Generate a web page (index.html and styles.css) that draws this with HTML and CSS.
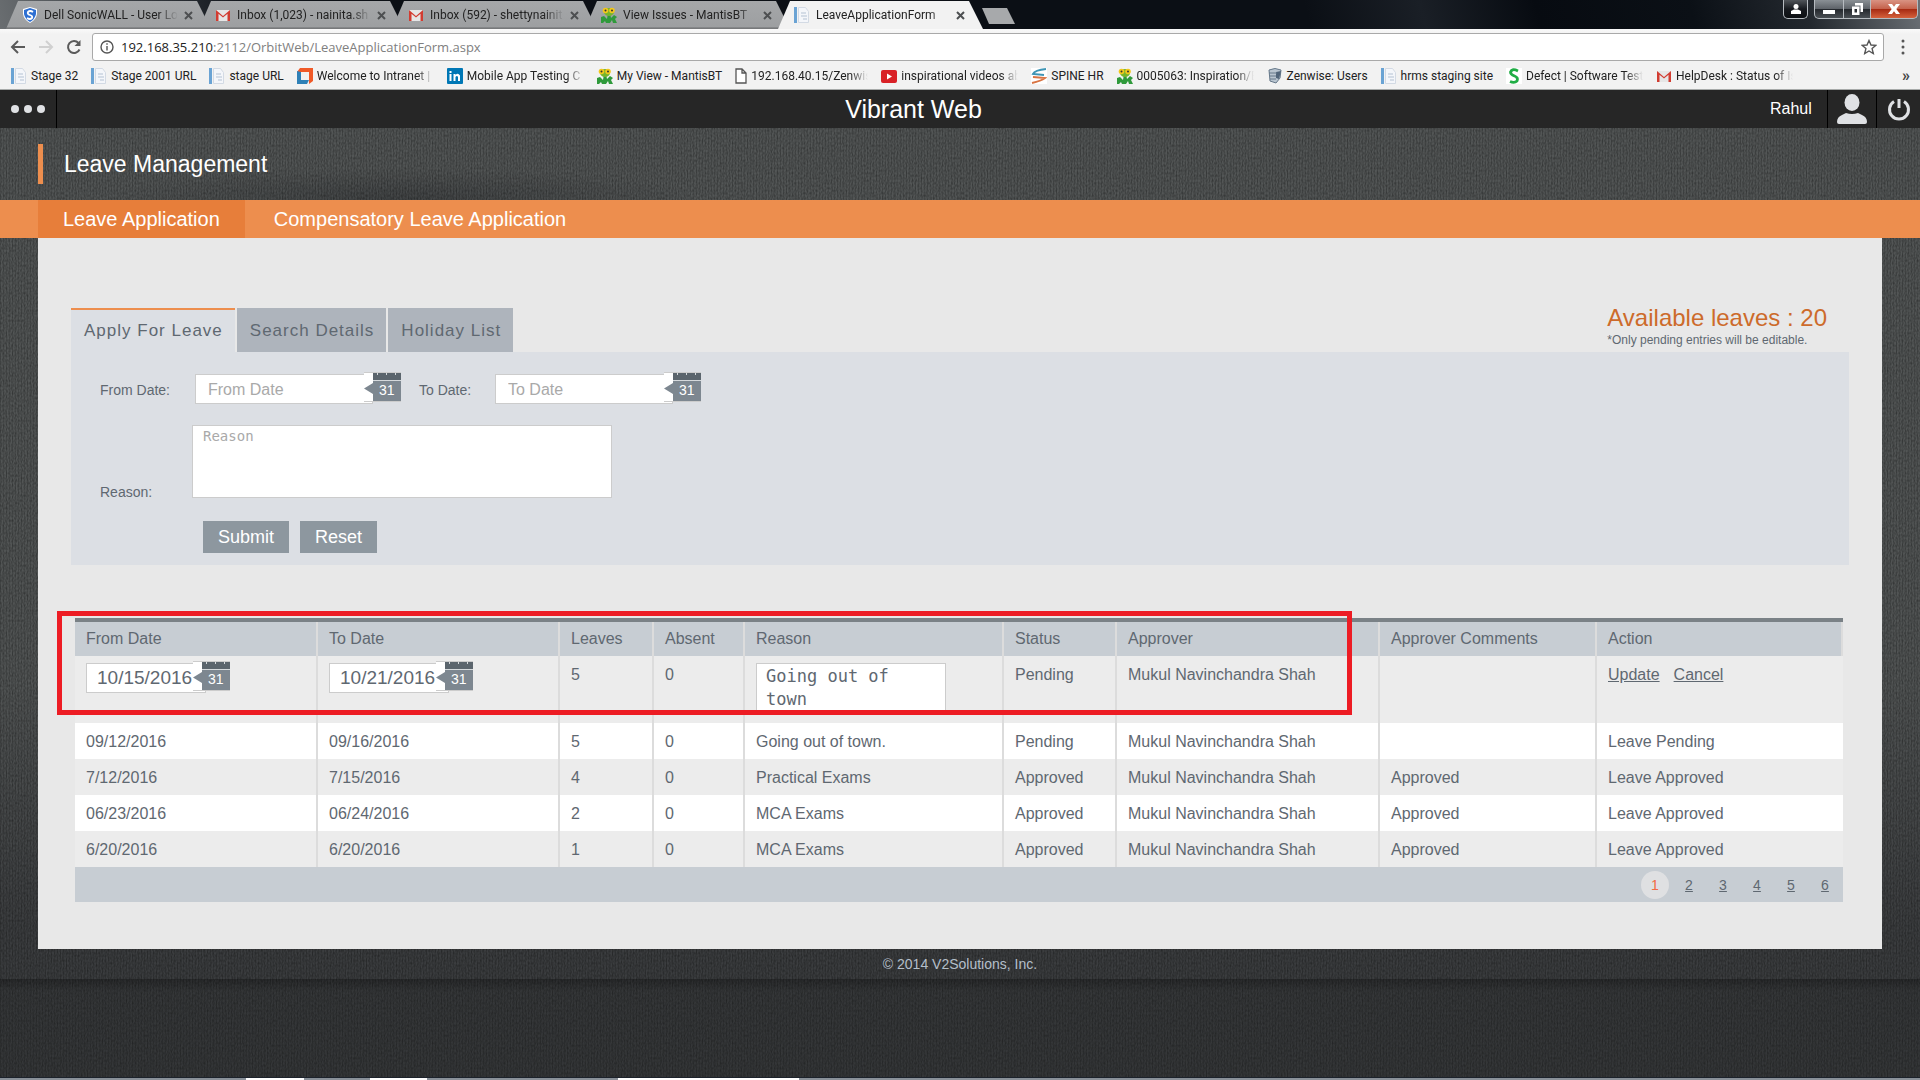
FILE: index.html
```html
<!DOCTYPE html>
<html lang="en">
<head>
<meta charset="utf-8">
<title>LeaveApplicationForm</title>
<link rel="stylesheet" href="styles.css">
</head>
<body>
<svg class="defs" aria-hidden="true">
  <symbol id="gmail" viewBox="0 0 16 16"><path fill="#e6e6e6" d="M1 3h14v11H1z"/><path fill="#d23c31" d="M1 3l7 6 7-6v11h-2.500V6.800L8 10.600 3.500 6.800V14H1z"/></symbol>
  <symbol id="doc" viewBox="0 0 16 16"><path fill="#6aa3d4" d="M0 0h3v16H0z"/><path fill="#f4f6fa" stroke="#d3dae4" d="M4.500.5h7l3 4v11h-10z"/><path stroke="#b4c2d3" d="M7 6h5M7 9h6M9 12h4"/></symbol>
  <symbol id="mantis" viewBox="0 0 16 16"><path fill="#2f9a3b" d="M0 10l3-1 3 3 1-6h2l1 5 3-3 3 2-2 2 2 4h-4l-1-3-2 3H5l-1-2-2 2H0z"/><ellipse cx="8" cy="5" rx="5" ry="4" fill="#77b52c"/><circle cx="4.500" cy="3.500" r="2.800" fill="#f3c81c"/><circle cx="11" cy="3.500" r="2.800" fill="#f3c81c"/><circle cx="4.500" cy="3.500" r="1" fill="#333"/><circle cx="11" cy="3.500" r="1" fill="#333"/></symbol>
  <symbol id="cal" viewBox="0 0 37 30"><path fill="#fff" d="M0 1h9v28H0z"/><path fill="#ccc" d="M0 0h37v1H0zM0 29h37v1H0z"/><path fill="#5b656d" d="M9 1h28v7H9z"/><path fill="#d5d9dc" d="M13 1h1v2h-1zM22 1h1v2h-1zM31 1h1v2h-1zM9 8h28v1H9z"/><path fill="#7d8790" d="M9 9h28v20H9V22L0 16.500 9 11z"/><text x="15" y="23" class="cal-num">31</text></symbol>
</svg>

<header class="browser">
  <div class="tabstrip">
    <div class="tab"><svg class="ico" viewBox="0 0 16 16"><path fill="#fff" d="M8 0l7 2v5q-1 6-7 9-6-3-7-9V2z"/><path fill="#2d6fd2" d="M8 1l6 2v4q-1 5-6 8-5-3-6-8V3z"/><path d="M11 5Q8 3 6 5q-1 2 2 3t2 3q-2 2-5 0" fill="none" stroke="#fff" stroke-width="1.800"/></svg><span class="tab-title">Dell SonicWALL - User Lo</span><button class="close" aria-label="Close tab"><svg viewBox="0 0 9 9"><path d="M1 1l7 7M8 1L1 8"/></svg></button></div>
    <div class="tab"><svg class="ico"><use href="#gmail"/></svg><span class="tab-title">Inbox (1,023) - nainita.sh</span><button class="close" aria-label="Close tab"><svg viewBox="0 0 9 9"><path d="M1 1l7 7M8 1L1 8"/></svg></button></div>
    <div class="tab"><svg class="ico"><use href="#gmail"/></svg><span class="tab-title">Inbox (592) - shettynainit</span><button class="close" aria-label="Close tab"><svg viewBox="0 0 9 9"><path d="M1 1l7 7M8 1L1 8"/></svg></button></div>
    <div class="tab"><svg class="ico"><use href="#mantis"/></svg><span class="tab-title">View Issues - MantisBT</span><button class="close" aria-label="Close tab"><svg viewBox="0 0 9 9"><path d="M1 1l7 7M8 1L1 8"/></svg></button></div>
    <div class="tab current"><svg class="ico"><use href="#doc"/></svg><span class="tab-title">LeaveApplicationForm</span><button class="close" aria-label="Close tab"><svg viewBox="0 0 9 9"><path d="M1 1l7 7M8 1L1 8"/></svg></button></div>
    <button class="newtab" aria-label="New tab"></button>
    <div class="winbtns">
      <button class="win person" aria-label="Profile"><svg viewBox="0 0 12 12"><circle cx="6" cy="3.500" r="2.500"/><path d="M1 11V8l3-1.500h4L11 8v3z"/></svg></button>
      <button class="win min" aria-label="Minimize"><svg viewBox="0 0 12 12"><path d="M0 7h12v4H0z"/></svg></button>
      <button class="win max" aria-label="Restore"><svg viewBox="0 0 12 12"><path fill-rule="evenodd" d="M4 0h8v9H9.500V2.500H4zM1 3.500h7.500V12H1zM3.500 6v3.500H6V6z"/></svg></button>
      <button class="win x" aria-label="Close"><svg viewBox="0 0 12 12"><path d="M0 1h4l2 2.700L8 1h4L8.300 6l3.700 5H8L6 8.300 4 11H0l3.700-5z"/></svg></button>
    </div>
  </div>
  <div class="toolbar">
    <button class="nav" aria-label="Back"><svg viewBox="0 0 16 16"><path d="M15 8H2M8 2L2 8l6 6"/></svg></button>
    <button class="nav off" aria-label="Forward"><svg viewBox="0 0 16 16"><path d="M1 8h13M8 2l6 6-6 6"/></svg></button>
    <button class="nav" aria-label="Reload"><svg viewBox="0 0 16 16"><path d="M13.500 10.500A6 6 0 1 1 12.500 4"/><path class="solid" d="M14.500 1v6h-6z"/></svg></button>
    <div class="urlbox">
      <svg class="info" viewBox="0 0 14 14"><circle cx="7" cy="7" r="6"/><path d="M7 6v4.500M7 3.300v1.500"/></svg>
      <div class="url"><b>192.168.35.210</b>:2112/OrbitWeb/LeaveApplicationForm.aspx</div>
      <svg class="star" viewBox="0 0 16 16"><path d="M8 1.500l2 4.500 4.700.4-3.600 3.200 1.200 4.900L8 12l-4.300 2.500 1.200-4.900L1.300 6.400 6 6z"/></svg>
    </div>
    <button class="kebab" aria-label="Menu"><svg viewBox="0 0 4 16"><circle cx="2" cy="2" r="1.500"/><circle cx="2" cy="8" r="1.500"/><circle cx="2" cy="14" r="1.500"/></svg></button>
  </div>
  <nav class="bookmarks">
    <a href="#"><svg class="ico"><use href="#doc"/></svg><span>Stage 32</span></a>
    <a href="#"><svg class="ico"><use href="#doc"/></svg><span>Stage 2001 URL</span></a>
    <a href="#"><svg class="ico"><use href="#doc"/></svg><span>stage URL</span></a>
    <a href="#"><svg class="ico" viewBox="0 0 16 16"><path fill="#f05a28" d="M3 0h13v13l-4 3V4H0z"/><path fill="#2f81b7" d="M0 3l4 1v8h8l-2 4H0z"/></svg><span class="long">Welcome to Intranet |</span></a>
    <a href="#"><svg class="ico" viewBox="0 0 16 16"><rect width="16" height="16" rx="1" fill="#0077b5"/><path fill="#fff" d="M2.500 6h2v7h-2zM2.500 3h2v2h-2zM6.500 6h2v1q2.500-2.500 4.500.5V13h-2V9q-1-2-2.500 0v4h-2z"/></svg><span class="long">Mobile App Testing C</span></a>
    <a href="#"><svg class="ico"><use href="#mantis"/></svg><span>My View - MantisBT</span></a>
    <a href="#"><svg class="ico page" viewBox="0 0 12 16"><path fill="#fff" stroke="#555" stroke-width="1.300" d="M1 1h6l4 4v10H1zM7 1v4h4"/></svg><span class="long">192.168.40.15/Zenwis</span></a>
    <a href="#"><svg class="ico" viewBox="0 0 16 16"><rect y="2" width="16" height="13" rx="2" fill="#d92127"/><path fill="#fff" d="M6 5.500l5 3-5 3z"/></svg><span class="long">inspirational videos ab</span></a>
    <a href="#"><svg class="ico" viewBox="0 0 16 16"><path fill="#fff" d="M0 0h16v16H0z"/><path fill="none" stroke="#3f95b5" stroke-width="2" d="M15 1Q4 2 2 6l11 1"/><path fill="none" stroke="#d97443" stroke-width="2" d="M2 9l12 1q-4 3-13 5"/></svg><span>SPINE HR</span></a>
    <a href="#"><svg class="ico"><use href="#mantis"/></svg><span class="long">0005063: Inspiration/E</span></a>
    <a href="#"><svg class="ico" viewBox="0 0 16 16"><path fill="#b9c5d0" stroke="#66788a" d="M2 2q6-3 12 0l-1 8-4 5-6-2z"/><path fill="#51657a" d="M9 4l5-1-2 8-3-1z"/><path stroke="#66788a" fill="none" d="M2 5h8M3 8h6M3 11h6"/></svg><span>Zenwise: Users</span></a>
    <a href="#"><svg class="ico"><use href="#doc"/></svg><span>hrms staging site</span></a>
    <a href="#"><svg class="ico" viewBox="0 0 16 16"><path fill="#fff" d="M0 0h16v16H0z"/><path fill="none" stroke="#20ad45" stroke-width="2.800" d="M12 3Q6 0 4.500 4q0 2.500 4 4t2.500 5q-2.500 2.500-7 .5"/></svg><span class="long">Defect | Software Test</span></a>
    <a href="#"><svg class="ico"><use href="#gmail"/></svg><span class="long">HelpDesk : Status of Is</span></a>
    <button class="more" aria-label="More bookmarks">»</button>
  </nav>
</header>

<div class="app">
  <header class="appbar">
    <button class="dots" aria-label="Menu"><i></i><i></i><i></i></button>
    <div class="brand">Vibrant Web</div>
    <div class="user">Rahul</div>
    <a class="barbtn avatar" href="#" aria-label="Profile"><svg viewBox="0 0 30 30"><ellipse cx="15" cy="8.500" rx="7.500" ry="8.500"/><path d="M0 28q0-5 5-7l4-2q6 2 12 0l4 2q5 2 5 7 0 2-2 2H2q-2 0-2-2z"/></svg></a>
    <a class="barbtn" href="#" aria-label="Log out"><svg class="power" viewBox="0 0 24 24"><path d="M7 4.500a9.500 9.500 0 1 0 10 0M12 2v9"/></svg></a>
  </header>

  <div class="titlebar"><h1>Leave Management</h1></div>
  <nav class="mainnav"><a class="on" href="#">Leave Application</a><a href="#">Compensatory Leave Application</a></nav>

  <main class="panel">
    <div class="tabsrow">
      <nav class="tabs"><a class="on" href="#">Apply For Leave</a><a href="#">Search Details</a><a href="#">Holiday List</a></nav>
      <div class="avail"><p class="count">Available leaves : 20</p><p class="note">*Only pending entries will be editable.</p></div>
    </div>

    <form class="form">
      <div class="row dates">
        <label for="from">From Date:</label>
        <span class="date"><input id="from" type="text" placeholder="From Date"><svg class="cal"><use href="#cal"/></svg></span>
        <label for="to" class="second">To Date:</label>
        <span class="date"><input id="to" type="text" placeholder="To Date"><svg class="cal"><use href="#cal"/></svg></span>
      </div>
      <div class="row why">
        <label for="reason">Reason:</label>
        <textarea id="reason" placeholder="Reason"></textarea>
      </div>
      <div class="row buttons"><button type="button">Submit</button><button type="button">Reset</button></div>
    </form>

    <div class="tablewrap">
      <table>
        <colgroup><col class="c-from"><col class="c-to"><col class="c-leaves"><col class="c-absent"><col class="c-reason"><col class="c-status"><col class="c-appr"><col class="c-comm"><col></colgroup>
        <thead><tr><th>From Date</th><th>To Date</th><th>Leaves</th><th>Absent</th><th>Reason</th><th>Status</th><th>Approver</th><th>Approver Comments</th><th>Action</th></tr></thead>
        <tbody>
          <tr class="edit"><td><span class="date small"><input type="text" value="10/15/2016" aria-label="From date"><svg class="cal"><use href="#cal"/></svg></span></td><td><span class="date small"><input type="text" value="10/21/2016" aria-label="To date"><svg class="cal"><use href="#cal"/></svg></span></td><td>5</td><td>0</td><td><textarea aria-label="Reason">Going out of town</textarea></td><td>Pending</td><td>Mukul Navinchandra Shah</td><td></td><td><a href="#">Update</a><a href="#">Cancel</a></td></tr>
          <tr><td>09/12/2016</td><td>09/16/2016</td><td>5</td><td>0</td><td>Going out of town.</td><td>Pending</td><td>Mukul Navinchandra Shah</td><td></td><td>Leave Pending</td></tr>
          <tr><td>7/12/2016</td><td>7/15/2016</td><td>4</td><td>0</td><td>Practical Exams</td><td>Approved</td><td>Mukul Navinchandra Shah</td><td>Approved</td><td>Leave Approved</td></tr>
          <tr><td>06/23/2016</td><td>06/24/2016</td><td>2</td><td>0</td><td>MCA Exams</td><td>Approved</td><td>Mukul Navinchandra Shah</td><td>Approved</td><td>Leave Approved</td></tr>
          <tr><td>6/20/2016</td><td>6/20/2016</td><td>1</td><td>0</td><td>MCA Exams</td><td>Approved</td><td>Mukul Navinchandra Shah</td><td>Approved</td><td>Leave Approved</td></tr>
        </tbody>
      </table>
      <nav class="pager"><span>1</span><a href="#">2</a><a href="#">3</a><a href="#">4</a><a href="#">5</a><a href="#">6</a></nav>
      <div class="highlight"></div>
    </div>
  </main>
  <footer>© 2014 V2Solutions, Inc.</footer>
  <div class="below"></div>
</div>
<div class="taskbar"></div>
</body>
</html>
```
FILE: styles.css
```css
* { box-sizing: border-box; }
body { margin: 0; min-height: 100vh; display: flex; flex-direction: column; font-family: "Liberation Sans", Arial, sans-serif; font-size: 16px; color: #5f6871; background: #303232; }
h1, p { margin: 0; font-weight: normal; }
button { font: inherit; border: 0; padding: 0; background: none; }
a { color: inherit; }
.defs { position: absolute; width: 0; height: 0; }

/* Browser frame */
.browser { font: 12px Roboto, "Open Sans", sans-serif; color: #222; background: #f2f2f2; border-bottom: 1px solid #a7aaa9; }
.ico { width: 16px; height: 16px; flex: none; }
.ico.page { width: 12px; }
.tabstrip { display: flex; height: 29px; padding: 1px 0 0 6px; background: linear-gradient(75deg, #6a6e71 0, #40454a 6%, #0b0f15 14%, #0b0f15 68%, #1a1f26 74%, #070b11 80%, #0b1016 88%, #23282e 94%, #6b7075 100%); }
.tab { position: relative; z-index: 0; width: 193px; display: flex; align-items: center; padding: 0 6px 0 16px; }
.tab::before { content: ""; position: absolute; z-index: -1; inset: 0 -12px 0 0; background: linear-gradient(#a5a7a9, #9d9fa1 94%, #77797b 95%); clip-path: polygon(0 100%, 12px 0, calc(100% - 14px) 0, 100% 100%); }
.tab.current::before { background: #f2f2f2; }
.tab-title { flex: 1; margin: 0 6px 0 6px; overflow: hidden; white-space: nowrap; mask-image: linear-gradient(90deg, #000 85%, transparent); }
.close { width: 9px; height: 9px; display: flex; }
.close svg { width: 9px; height: 9px; stroke: #4d4f51; stroke-width: 2; }
.newtab { width: 33px; height: 16px; margin: 7px 0 0 11px; background: #a7a9ab; clip-path: polygon(0 0, 25px 0, 33px 100%, 7px 100%); }
.winbtns { display: flex; margin: -1px 2px 0 auto; height: 19px; }
.win { display: flex; align-items: center; justify-content: center; border: 1px solid #b6bbc0; border-top: 0; background: linear-gradient(#8a9095, #5d6268 50%, #24282d 51%, #4a4f54); }
.win svg { width: 12px; height: 12px; fill: #fff; }
.person { width: 25px; margin-right: 6px; border-radius: 0 0 5px 5px; background: linear-gradient(#50555a, #171a1f 50%, #0c0f13); }
.min { width: 30px; border-radius: 0 0 0 5px; }
.max { width: 27px; border-left: 0; }
.x { width: 47px; border-left: 0; border-radius: 0 0 5px 0; background: linear-gradient(#d99383, #c4604a 50%, #a62a12 51%, #d5613c); }
.toolbar { display: flex; align-items: center; height: 37px; padding: 0 15px 1px 10px; background: linear-gradient(#fafafa, #f2f2f2 5px); }
.nav { width: 16px; height: 16px; margin-right: 12px; display: flex; }
.nav svg { width: 16px; height: 16px; fill: none; stroke: #5a5a5a; stroke-width: 2; }
.nav svg .solid { fill: #5a5a5a; stroke: none; }
.nav.off svg { stroke: #d0d0d0; }
.nav:nth-child(3) { margin-right: 10px; }
.urlbox { flex: 1; height: 28px; display: flex; align-items: center; padding: 0 6px 0 7px; border: 1px solid #a9a9a9; border-radius: 3px; background: #fff; }
.info { width: 14px; height: 14px; fill: none; stroke: #555; stroke-width: 1.4; }
.url { flex: 1; padding-left: 7px; font-family: "Open Sans", sans-serif; font-size: 13px; color: #808080; }
.url b { font-weight: normal; color: #222; }
.star { width: 16px; height: 16px; fill: none; stroke: #555; stroke-width: 1.4; }
.kebab { width: 4px; height: 16px; margin-left: 17px; display: flex; }
.kebab svg { width: 4px; fill: #555; }
.bookmarks { display: flex; align-items: center; gap: 13px; height: 23px; padding: 0 10px 4px 11px; }
.bookmarks a { display: flex; align-items: center; gap: 4px; text-decoration: none; white-space: nowrap; line-height: 16px; }
.bookmarks .long { width: 117px; overflow: hidden; mask-image: linear-gradient(90deg, #000 85%, transparent); }
.more { margin-left: auto; font-size: 16px; line-height: 16px; font-weight: bold; color: #444; }

/* Application */
.app { flex: 1; display: flex; flex-direction: column; background: url("data:image/svg+xml,%3Csvg xmlns='http://www.w3.org/2000/svg' width='300' height='300'%3E%3Cfilter id='n' x='0' y='0' width='100%25' height='100%25'%3E%3CfeTurbulence type='fractalNoise' baseFrequency='.8 .4' numOctaves='1' stitchTiles='stitch'/%3E%3CfeColorMatrix values='0 0 0 0 0 0 0 0 0 0 0 0 0 0 0 .6 0 0 0 -.2'/%3E%3C/filter%3E%3Crect width='300' height='300' filter='url(%23n)'/%3E%3C/svg%3E"), repeating-linear-gradient(90deg, rgba(0,0,0,.12) 0 1px, transparent 1px 3px), radial-gradient(ellipse 300px 30px at 400px 108px, rgba(35,37,40,.35), transparent), linear-gradient(#535656, #515454 60%, #3b3d3f 85%, #3a3c3e); }
.appbar { display: flex; align-items: center; height: 38px; background: #262626; }
.dots { width: 57px; height: 100%; display: flex; align-items: center; gap: 5px; padding-left: 11px; border-right: 1px solid #000; }
.dots i { width: 8px; height: 8px; border-radius: 50%; background: #dfe1e4; }
.brand { flex: 1; text-align: center; font-size: 25px; line-height: 38px; color: #fff; }
.user { width: 57px; line-height: 36px; color: #fff; }
.barbtn { width: 44px; height: 100%; display: flex; align-items: center; justify-content: center; border-left: 1px solid #000; fill: #dfe1e4; }
.avatar { width: 49px; }
.barbtn svg { width: 30px; height: 30px; }
.barbtn .power { width: 24px; height: 24px; fill: none; stroke: #dfe1e4; stroke-width: 3; }
.titlebar { height: 72px; padding: 16px 38px; }
.titlebar h1 { border-left: 5px solid #ed8e4e; padding-left: 21px; font-size: 23px; line-height: 40px; color: #fff; }
.mainnav { display: flex; height: 38px; padding-left: 38px; background: #ed8e4e; }
.mainnav a { padding: 0 29px; font-size: 20px; line-height: 38px; color: #fff; text-decoration: none; }
.mainnav .on { padding: 0 25px; background: #e77e3a; }
.panel { margin: 0 38px; padding: 70px 33px 47px; background: #e8e8e8; }
.tabsrow { display: flex; justify-content: space-between; align-items: flex-end; height: 44px; }
.tabs { display: flex; gap: 2px; }
.tabs a { height: 44px; padding: 0 12px 0 13px; line-height: 46px; font-size: 17px; letter-spacing: 1px; text-decoration: none; background: #aeb4bc; }
.tabs .on { background: #dcdfe4; border-top: 2px solid #ed8e4e; line-height: 42px; }
.avail { margin-right: 22px; padding-bottom: 4px; }
.count { font-size: 24px; line-height: 28px; color: #cd6b2b; }
.note { font-size: 12px; line-height: 16px; }
.form { padding: 22px 29px 12px; background: #dcdfe4; }
.form label { width: 95px; padding-top: 2px; font-size: 14px; }
.row { display: flex; }
.dates { align-items: center; }
.form .second { width: 76px; margin-left: 46px; }
input, textarea { font: inherit; color: #5f6871; border: 1px solid #ccc; border-radius: 0; background: #fff; outline: 0; }
::placeholder { color: #a9a9a9; opacity: 1; }
.date { position: relative; display: block; }
.date input { display: block; width: 178px; height: 30px; padding: 1px 12px 0; }
.cal { position: absolute; top: -2px; left: 169px; width: 37px; height: 30px; }
.cal-num { font-size: 14px; fill: #fff; }
.why { margin-top: 21px; align-items: flex-end; }
.form .why label { width: 92px; line-height: 12px; }
.why textarea { width: 420px; height: 73px; padding: 1px 10px; resize: none; font: 14px/18px "DejaVu Sans Mono", monospace; }
.buttons { gap: 11px; margin-top: 23px; padding-left: 103px; }
.buttons button { height: 32px; padding: 0 15px 1px; font-size: 18px; line-height: 30px; color: #fff; background: #8d979f; }
.tablewrap { position: relative; margin: 53px 6px 0 4px; }
table { width: 100%; table-layout: fixed; border-collapse: separate; border-spacing: 0; border-top: 4px solid #7a8186; }
.c-from { width: 243px; }
.c-to { width: 242px; }
.c-leaves { width: 94px; }
.c-absent { width: 91px; }
.c-reason { width: 259px; }
.c-status { width: 113px; }
.c-appr { width: 263px; }
.c-comm { width: 217px; }
th, td { padding: 2px 0 0 11px; height: 36px; line-height: 34px; text-align: left; font-weight: normal; vertical-align: top; border-right: 2px solid #dcdcdc; }
th { height: 34px; padding-top: 0; background: #c7cdd3; }
td:last-child { border-right: 0; }
tbody tr { background: #ececec; }
tbody tr:nth-child(even) { background: #fff; }
.edit td { height: 67px; }
.edit td a + a { margin-left: 14px; }
.small { margin-top: 5px; }
.small input { width: 120px; padding: 0 10px; font-size: 19px; }
.small .cal { left: 107px; }
.edit textarea { display: block; width: 190px; height: 50px; margin-top: 5px; padding: 1px 9px; overflow: hidden; resize: none; font: 17px/23px "DejaVu Sans Mono", monospace; }
.pager { display: flex; justify-content: flex-end; align-items: center; height: 35px; padding: 0 1px; background: #c7cdd3; font-size: 14px; }
.pager a { width: 34px; text-align: center; }
.pager span { width: 28px; line-height: 28px; margin-right: 3px; text-align: center; border-radius: 50%; background: #dfe0e2; color: #f26a44; }
.highlight { position: absolute; left: -18px; top: -7px; width: 1295px; height: 104px; border: 5px solid #ed1c24; }
footer { padding-top: 7px; height: 30px; line-height: 16px; text-align: center; font-size: 14px; color: #b4bfca; }
.below { flex: 1; background: linear-gradient(rgba(0,0,0,.3), rgba(30,32,32,.2) 12px); }
.taskbar { height: 3px; border-top: 1px solid #1c222b; background: linear-gradient(90deg, #8a9199 246px, #fff 246px 304px, #8a9199 304px 370px, #fff 370px 427px, #8a9199 427px 618px, #fff 618px 799px, #8a9199 799px); }
```
